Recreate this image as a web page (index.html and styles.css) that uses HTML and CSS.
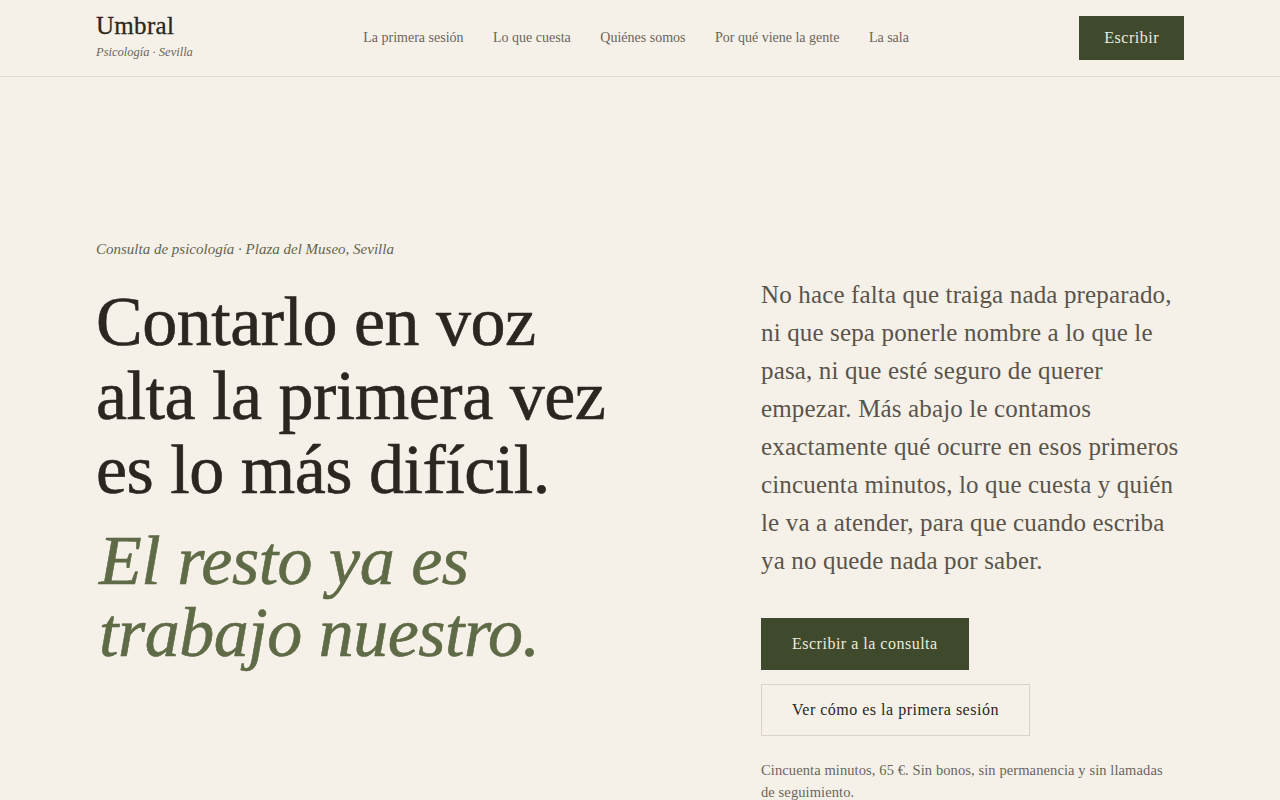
FILE: index.html
```html
<!DOCTYPE html>
<html lang="es">
<head>
<meta charset="utf-8">
<title>Umbral · Psicología · Sevilla</title>
<link rel="stylesheet" href="styles.css">
</head>
<body>
<header class="site-header">
  <div class="header-inner">
    <a class="brand" href="#">
      <span class="brand-name">Umbral</span>
      <span class="brand-sub">Psicología · Sevilla</span>
    </a>
    <nav class="main-nav">
      <a href="#">La primera sesión</a>
      <a href="#">Lo que cuesta</a>
      <a href="#">Quiénes somos</a>
      <a href="#">Por qué viene la gente</a>
      <a href="#">La sala</a>
    </nav>
    <a class="btn btn-header" href="#">Escribir</a>
  </div>
</header>
<main class="hero">
  <div class="hero-left">
    <p class="eyebrow">Consulta de psicología · Plaza del Museo, Sevilla</p>
    <h1 class="hero-title">
      <span class="title-main">Contarlo en voz alta la primera vez es lo más difícil.</span>
      <span class="title-accent">El resto ya es trabajo nuestro.</span>
    </h1>
  </div>
  <div class="hero-right">
    <p class="lead">No hace falta que traiga nada preparado, ni que sepa ponerle nombre a lo que le pasa, ni que esté seguro de querer empezar. Más abajo le contamos exactamente qué ocurre en esos primeros cincuenta minutos, lo que cuesta y quién le va a atender, para que cuando escriba ya no quede nada por saber.</p>
    <div class="actions">
      <a class="btn btn-primary" href="#">Escribir a la consulta</a>
      <a class="btn btn-outline" href="#">Ver cómo es la primera sesión</a>
    </div>
    <p class="note">Cincuenta minutos, 65 €. Sin bonos, sin permanencia y sin llamadas de seguimiento.</p>
  </div>
</main>
</body>
</html>
```
FILE: styles.css
```css
* { box-sizing: border-box; }
html, body {
  margin: 0;
  padding: 0;
  background: #f5f1e9;
  color: #2a2720;
  font-family: "Liberation Serif", "Times New Roman", serif;
}
a { text-decoration: none; color: inherit; }

.site-header {
  border-bottom: 1px solid #e0d9cb;
}
.header-inner {
  max-width: 1088px;
  margin: 0 auto;
  height: 76px;
  display: flex;
  align-items: center;
  justify-content: space-between;
}
.brand {
  display: flex;
  flex-direction: column;
  margin-bottom: 4px;
}
.brand-name {
  font-size: 25px;
  line-height: 28px;
  letter-spacing: 0.3px;
  color: #2a2720;
  -webkit-text-stroke: 0.3px #2a2720;
}
.brand-sub {
  font-size: 12.5px;
  line-height: 18px;
  font-style: italic;
  color: #6b655b;
  margin-top: 3px;
}
.main-nav {
  display: flex;
  gap: 29.5px;
  font-size: 14px;
  line-height: 20px;
  color: #6b655b;
}
.btn {
  display: inline-flex;
  align-items: center;
  justify-content: center;
  font-size: 16px;
  letter-spacing: 0.5px;
}
.btn-header {
  height: 44px;
  padding: 0 25px;
  background: #3f4a2c;
  color: #efe9dc;
}

.hero {
  max-width: 1088px;
  margin: 0 auto;
  padding-top: 160px;
  display: grid;
  grid-template-columns: 1fr 423px;
}
.eyebrow {
  margin: 0 0 24px;
  font-size: 15px;
  line-height: 24px;
  font-style: italic;
  color: #66654c;
}
.hero-title {
  margin: 0;
  font-weight: normal;
  font-size: 70px;
  line-height: 74px;
  max-width: 540px;
  letter-spacing: -0.5px;
}
.title-main {
  display: block;
  color: #2a2720;
  -webkit-text-stroke: 0.6px #2a2720;
}
.title-accent {
  display: block;
  margin-top: 18px;
  line-height: 72px;
  font-style: italic;
  color: #5f6b46;
  -webkit-text-stroke: 0.6px #5f6b46;
  padding-left: 3px;
}
.hero-right {
  padding-top: 39px;
}
.lead {
  margin: 0;
  font-size: 25px;
  line-height: 38px;
  letter-spacing: 0.15px;
  color: #5a544b;
}
.actions {
  margin-top: 38px;
  display: flex;
  flex-direction: column;
  align-items: flex-start;
  gap: 14px;
}
.btn-primary {
  height: 52px;
  padding: 0 31px;
  background: #3f4a2c;
  color: #efe9dc;
}
.btn-outline {
  height: 52px;
  padding: 0 30px;
  border: 1px solid #dbd3c4;
  color: #2a2720;
}
.note {
  margin: 23px 0 0;
  max-width: 410px;
  font-size: 14.5px;
  line-height: 22px;
  letter-spacing: 0.1px;
  color: #6b655b;
}
```
